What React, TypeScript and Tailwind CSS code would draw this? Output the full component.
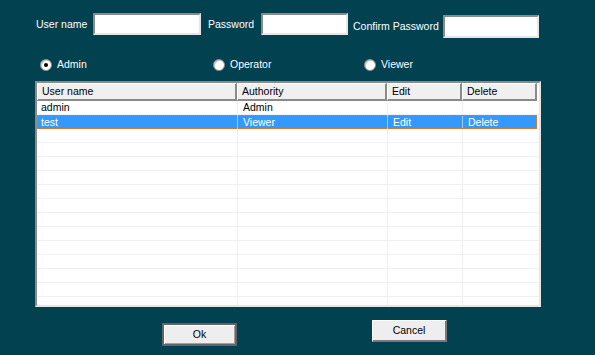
import React from "react";

const sunken =
  "bg-white border-t-2 border-l-2 border-b-2 border-r-2 border-t-[#8a8a8a] border-l-[#8a8a8a] border-b-[#e6e6e6] border-r-[#e6e6e6]";

function Radio({ checked, label, className }: { checked?: boolean; label: string; className?: string }) {
  return (
    <div className={"flex items-center " + (className ?? "")}>
      <div className="w-[12px] h-[12px] rounded-full bg-white border border-[#8a8a8a] flex items-center justify-center shadow-[inset_1px_1px_0_#c8c8c8]">
        {checked && <div className="w-[4px] h-[4px] rounded-full bg-black" />}
      </div>
      <span className="ml-[5px] text-white">{label}</span>
    </div>
  );
}

const cols = [
  { name: "User name", w: "w-[200px]" },
  { name: "Authority", w: "w-[150px]" },
  { name: "Edit", w: "w-[75px]" },
  { name: "Delete", w: "w-[75px]" },
];

const rows: (string[] | null)[] = [
  ["admin", "Admin", "", ""],
  ["test", "Viewer", "Edit", "Delete"],
  ...Array.from({ length: 13 }, () => null),
];

export default function App() {
  return (
    <div
      className="w-[595px] h-[355px] bg-[#024150] overflow-hidden text-[10.5px] leading-none"
      style={{ fontFamily: '"Liberation Sans", Arial, sans-serif' }}
    >
      {/* inputs row */}
      <div className="flex items-start pt-[13px] pl-[36px]">
        <div className="w-[57px] h-[22px] flex items-center text-white">User name</div>
        <div className={sunken + " w-[108px] h-[22px]"} />
        <div className="w-[60px] h-[22px] pl-[7px] flex items-center text-white">Password</div>
        <div className={sunken + " w-[87px] h-[22px]"} />
        <div className="w-[95px] h-[23px] mt-[2px] pl-[5px] flex items-center text-white">Confirm Password</div>
        <div className={sunken + " w-[96px] h-[23px] mt-[2px]"} />
      </div>

      {/* radios */}
      <div className="flex items-center mt-[20px] pl-[40px] h-[13px]">
        <Radio checked label="Admin" className="w-[173px]" />
        <Radio label="Operator" className="w-[151px]" />
        <Radio label="Viewer" />
      </div>

      {/* list view */}
      <div className="ml-[35px] mt-[10px] w-[506px] h-[226px] bg-white border-2 border-t-[#8a8a8a] border-l-[#8a8a8a] border-b-[#e6e6e6] border-r-[#e6e6e6] overflow-hidden">
        <div className="flex h-[18px]">
          {cols.map((c) => (
            <div
              key={c.name}
              className={
                c.w +
                " h-full bg-[#f0f0f0] border-t border-l border-t-white border-l-white border-b-2 border-r-2 border-b-[#8a8a8a] border-r-[#8a8a8a] flex items-center pl-[4px] text-black"
              }
            >
              {c.name}
            </div>
          ))}
        </div>
        {rows.map((r, i) => {
          const sel = i === 1;
          return (
            <div
              key={i}
              className={
                "flex h-[14px] " +
                (sel
                  ? "bg-[#3399ff] text-white outline-1 outline-dotted outline-[#d08040] -outline-offset-1 w-[500px]"
                  : "text-black border-b border-[#f0f0f0]")
              }
            >
              {cols.map((c, j) => (
                <div
                  key={j}
                  className={
                    c.w +
                    " h-full flex items-center " +
                    (j === 0 ? "pl-[4px] " : "pl-[5px] ") +
                    (sel ? "border-l border-[#f0f0f0]/60 first:border-l-0" : "border-l border-[#f0f0f0] first:border-l-0")
                  }
                >
                  {r ? r[j] : ""}
                </div>
              ))}
            </div>
          );
        })}
      </div>

      {/* buttons */}
      <div className="flex items-start mt-[13px] pl-[162px]">
        <button className="mt-[3px] w-[75px] h-[23px] bg-[#eeeeee] border-2 border-[#646464] text-black flex items-center justify-center shadow-[inset_1px_1px_0_#ffffff,inset_-1px_-1px_0_#a0a0a0]">
          Ok
        </button>
        <button className="ml-[135px] w-[75px] h-[22px] bg-[#eeeeee] border-t border-l border-t-white border-l-white border-b-2 border-r-2 border-b-[#7a7a7a] border-r-[#7a7a7a] text-black flex items-center justify-center">
          Cancel
        </button>
      </div>
    </div>
  );
}
